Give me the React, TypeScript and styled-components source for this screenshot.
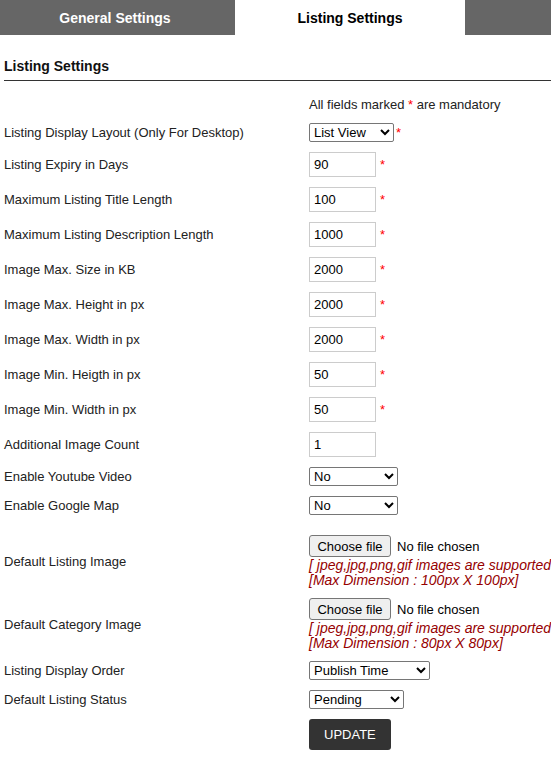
import React from "react";
import styled, { createGlobalStyle } from "styled-components";

const GlobalStyle = createGlobalStyle`
  html, body {
    margin: 0;
    padding: 0;
    background: #fff;
    overflow: hidden;
  }
  body {
    font-family: "Liberation Sans", Arial, sans-serif;
    font-size: 13px;
    color: #222;
  }
`;

const Page = styled.div`
  width: 551px;
  overflow: hidden;
`;

const TabBar = styled.div`
  display: flex;
  height: 35px;
  width: 700px;
`;

const Tab = styled.div<{ $active?: boolean; $width: number; $shift?: number }>`
  flex: 0 0 ${(p) => p.$width}px;
  display: flex;
  align-items: center;
  justify-content: center;
  padding-right: ${(p) => p.$shift || 0}px;
  box-sizing: border-box;
  background: ${(p) => (p.$active ? "#fff" : "#666")};
  color: ${(p) => (p.$active ? "#000" : "#fff")};
  font-weight: bold;
  font-size: 14px;
`;

const Heading = styled.h3`
  margin: 0 0 0 4px;
  padding: 23px 0 6px;
  font-size: 14px;
  line-height: 16px;
  color: #111;
  border-bottom: 1px solid #333;
`;

const Form = styled.div`
  display: grid;
  grid-template-columns: 305px 1fr;
  margin: 11px 0 0 4px;
`;

const Label = styled.div`
  display: flex;
  align-items: center;
  padding: 5px 0;
  line-height: 15px;
`;

const Field = styled.div`
  display: flex;
  align-items: center;
  padding: 5px 0;
  line-height: 15px;
  white-space: nowrap;
`;

const FileField = styled.div`
  padding: 5px 0;
  white-space: nowrap;
`;

const Spacer = styled.div`
  grid-column: 1 / span 2;
  height: 10px;
`;

const Star = styled.span<{ $gap?: number }>`
  color: #f00;
  margin-left: ${(p) => (p.$gap === undefined ? 4 : p.$gap)}px;
`;

const Note = styled.span`
  color: #222;
  line-height: 16px;
`;

const TextInput = styled.input`
  box-sizing: border-box;
  width: 67px;
  height: 25px;
  border: 1px solid #ccc;
  padding: 0 4px;
  font-family: "Liberation Sans", Arial, sans-serif;
  font-size: 13px;
  color: #000;
  outline: none;
`;

const Select = styled.select<{ $width: number }>`
  box-sizing: border-box;
  width: ${(p) => p.$width}px;
  height: 19px;
  font-family: "Liberation Sans", Arial, sans-serif;
  font-size: 13px;
  color: #000;
  border: 1px solid #767676;
  border-radius: 2px;
  background: #fff;
`;

const FilePicker = styled.label`
  display: flex;
  align-items: center;
  height: 22px;
  margin-bottom: 1px;
  color: #000;
  cursor: pointer;

  input {
    display: none;
  }
`;

const ChooseButton = styled.span`
  box-sizing: border-box;
  display: inline-flex;
  align-items: center;
  justify-content: center;
  width: 82px;
  height: 22px;
  background: #efefef;
  border: 1px solid #767676;
  border-radius: 3px;
  color: #000;
  margin-right: 6px;
`;

const Hint = styled.div`
  font-style: italic;
  font-size: 14px;
  color: #960000;
  line-height: 15px;
`;

const UpdateButton = styled.button`
  height: 31px;
  padding: 0 15px;
  border: none;
  border-radius: 3px;
  background: #333;
  color: #fff;
  font-family: "Liberation Sans", Arial, sans-serif;
  font-size: 13px;
`;

const textRows: [string, string, boolean][] = [
  ["Listing Expiry in Days", "90", true],
  ["Maximum Listing Title Length", "100", true],
  ["Maximum Listing Description Length", "1000", true],
  ["Image Max. Size in KB", "2000", true],
  ["Image Max. Height in px", "2000", true],
  ["Image Max. Width in px", "2000", true],
  ["Image Min. Heigth in px", "50", true],
  ["Image Min. Width in px", "50", true],
  ["Additional Image Count", "1", false],
];

function FileUpload({ dimension }: { dimension: string }) {
  return (
    <FileField>
      <FilePicker>
        <input type="file" />
        <ChooseButton>Choose file</ChooseButton>
        No file chosen
      </FilePicker>
      <Hint>[ jpeg,jpg,png,gif images are supported ]</Hint>
      <Hint>[Max Dimension : {dimension}]</Hint>
    </FileField>
  );
}

export default function App() {
  return (
    <Page>
      <GlobalStyle />
      <TabBar>
        <Tab $width={235} $shift={5}>General Settings</Tab>
        <Tab $width={230} $active>Listing Settings</Tab>
        <Tab $width={230}></Tab>
      </TabBar>
      <Heading>Listing Settings</Heading>
      <Form>
        <Label />
        <Field>
          <Note>
            All fields marked <Star $gap={0}>*</Star> are mandatory
          </Note>
        </Field>

        <Label>Listing Display Layout (Only For Desktop)</Label>
        <Field>
          <Select $width={85} defaultValue="list">
            <option value="list">List View</option>
            <option value="grid">Grid View</option>
          </Select>
          <Star $gap={2}>*</Star>
        </Field>

        {textRows.map(([label, value, required]) => (
          <React.Fragment key={label}>
            <Label>{label}</Label>
            <Field>
              <TextInput defaultValue={value} />
              {required && <Star>*</Star>}
            </Field>
          </React.Fragment>
        ))}

        <Label>Enable Youtube Video</Label>
        <Field>
          <Select $width={89} defaultValue="no">
            <option value="no">No</option>
            <option value="yes">Yes</option>
          </Select>
        </Field>

        <Label>Enable Google Map</Label>
        <Field>
          <Select $width={89} defaultValue="no">
            <option value="no">No</option>
            <option value="yes">Yes</option>
          </Select>
        </Field>

        <Spacer />

        <Label>Default Listing Image</Label>
        <FileUpload dimension="100px X 100px" />

        <Label>Default Category Image</Label>
        <FileUpload dimension="80px X 80px" />

        <Label>Listing Display Order</Label>
        <Field>
          <Select $width={121} defaultValue="publish">
            <option value="publish">Publish Time</option>
            <option value="title">Title</option>
          </Select>
        </Field>

        <Label>Default Listing Status</Label>
        <Field>
          <Select $width={95} defaultValue="pending">
            <option value="pending">Pending</option>
            <option value="active">Active</option>
          </Select>
        </Field>

        <Label />
        <Field>
          <UpdateButton>UPDATE</UpdateButton>
        </Field>
      </Form>
    </Page>
  );
}
